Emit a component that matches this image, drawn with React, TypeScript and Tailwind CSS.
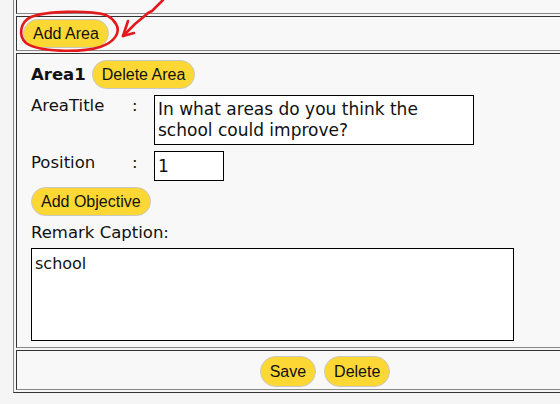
import React from "react";

const Btn = ({ children, tall = false }: { children: React.ReactNode; tall?: boolean }) => (
  <button
    className={
      tall
        ? "rounded-full border border-[#c8c8c8] bg-[#fdd835] px-[9px] py-[5px] text-[16px] leading-[19px] text-[#111] font-['Liberation_Sans',Arial,sans-serif] whitespace-nowrap"
        : "rounded-full border border-[#c8c8c8] bg-[#fdd835] px-[9px] py-[4px] text-[16px] leading-[19px] text-[#111] font-['Liberation_Sans',Arial,sans-serif] whitespace-nowrap"
    }
  >
    {children}
  </button>
);

const cell =
  "border border-t-[#333] border-l-[#333] border-b-[#888] border-r-[#888] bg-[#f8f8f8]";

export default function App() {
  return (
    <div className="relative w-[560px] h-[404px] overflow-hidden bg-[#f5f5f5] font-['DejaVu_Sans',Verdana,sans-serif] text-[#111]">
      <div className="ml-[13px] mt-[-9px] w-[624px] border border-t-[#888] border-l-[#888] border-b-[#333] border-r-[#333] p-[2px] flex flex-col gap-[2px]">
        {/* row 0 (cut off) */}
        <div className={`${cell} h-[20px]`} />

        {/* row 1 */}
        <div className={`${cell} h-[35px] flex items-center pl-[6px]`}>
          <Btn>Add Area</Btn>
        </div>

        {/* row 2 */}
        <div className={`${cell} h-[295px] pl-[14px] pt-[6px] flex flex-col items-start`}>
          <div className="flex items-center gap-[6px]">
            <span className="font-bold text-[16.5px] leading-[19px]">Area1</span>
            <Btn>Delete Area</Btn>
          </div>

          <div className="mt-[6px] flex items-start">
            <span className="w-[101px] pt-[1px] text-[16.5px] leading-[19px]">AreaTitle</span>
            <span className="w-[22px] pt-[1px] text-[16.5px] leading-[19px]">:</span>
            <textarea
              readOnly
              defaultValue="In what areas do you think the school could improve?"
              className="w-[320px] h-[50px] resize-none overflow-hidden border border-black bg-white px-[3px] pt-[3px] text-[17px] leading-[21px] font-['DejaVu_Sans',Verdana,sans-serif] text-[#111] outline-none"
            />
          </div>

          <div className="mt-[6px] flex items-start">
            <span className="w-[101px] pt-[2px] text-[16.5px] leading-[19px]">Position</span>
            <span className="w-[22px] pt-[2px] text-[16.5px] leading-[19px]">:</span>
            <input
              readOnly
              defaultValue="1"
              className="w-[70px] h-[30px] border border-black bg-white pl-[3px] text-[17px] font-['DejaVu_Sans',Verdana,sans-serif] text-[#111] outline-none"
            />
          </div>

          <div className="mt-[6px]">
            <Btn>Add Objective</Btn>
          </div>

          <div className="mt-[7px] text-[16.5px] leading-[19px]">Remark Caption:</div>

          <textarea
            readOnly
            defaultValue="school"
            className="mt-[6px] w-[483px] h-[93px] resize-none overflow-hidden border border-black bg-white px-[3px] pt-[5px] text-[16px] leading-[19px] font-['DejaVu_Sans',Verdana,sans-serif] text-[#111] outline-none"
          />
        </div>

        {/* row 3 */}
        <div className={`${cell} h-[40px] flex items-start justify-center gap-[8px] pt-[5px]`}>
          <Btn tall>Save</Btn>
          <Btn tall>Delete</Btn>
        </div>
      </div>

      {/* red annotation */}
      <svg
        className="pointer-events-none absolute left-0 top-0"
        width="560"
        height="404"
        viewBox="0 0 560 404"
        fill="none"
      >
        <path
          d="M 106 15 C 88 10, 46 11, 31 17 C 20 22, 18 36, 26 43 C 38 52, 80 53, 100 47 C 115 42, 121 32, 116 24 C 112 17, 104 13, 94 13"
          stroke="#e4191b"
          strokeWidth="2.6"
          strokeLinecap="round"
        />
        <path
          d="M 163 0 L 156 7 L 152 11 L 148 13 L 141 19 L 135 24 L 129 30 L 123 36"
          stroke="#e4191b"
          strokeWidth="2.6"
          strokeLinecap="round"
          strokeLinejoin="round"
        />
        <path
          d="M 128 21 L 123 36 L 134 33"
          stroke="#e4191b"
          strokeWidth="2.6"
          strokeLinecap="round"
          strokeLinejoin="round"
        />
      </svg>
    </div>
  );
}
